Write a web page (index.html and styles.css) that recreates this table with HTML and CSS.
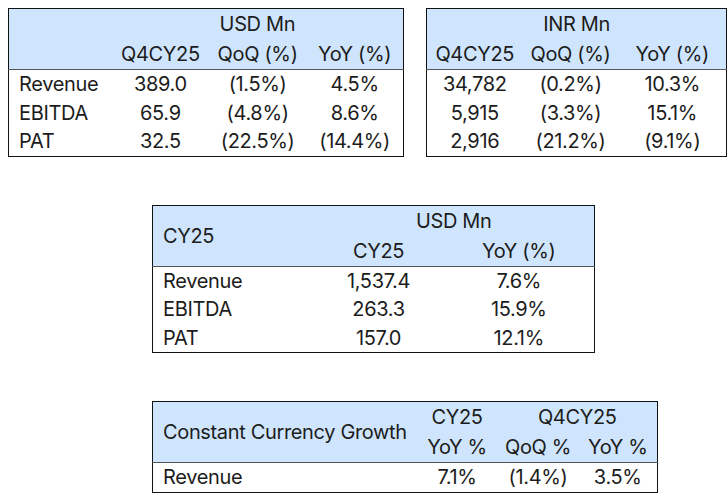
FILE: index.html
```html
<!DOCTYPE html>
<html>
<head>
<meta charset="utf-8">
<link rel="stylesheet" href="styles.css">
</head>
<body>
<div class="page">
  <div class="top-row">
    <table class="fin t1">
      <colgroup><col class="c-label1"><col class="c-n"><col class="c-n"><col class="c-n"></colgroup>
      <thead>
        <tr><th></th><th colspan="3">USD Mn</th></tr>
        <tr class="last-head"><th></th><th>Q4CY25</th><th>QoQ (%)</th><th>YoY (%)</th></tr>
      </thead>
      <tbody>
        <tr><td class="lbl">Revenue</td><td>389.0</td><td>(1.5%)</td><td>4.5%</td></tr>
        <tr><td class="lbl">EBITDA</td><td>65.9</td><td>(4.8%)</td><td>8.6%</td></tr>
        <tr><td class="lbl">PAT</td><td>32.5</td><td>(22.5%)</td><td>(14.4%)</td></tr>
      </tbody>
    </table>
    <table class="fin t2">
      <colgroup><col class="c2a"><col class="c2b"><col class="c2c"></colgroup>
      <thead>
        <tr><th colspan="3">INR Mn</th></tr>
        <tr class="last-head"><th>Q4CY25</th><th>QoQ (%)</th><th>YoY (%)</th></tr>
      </thead>
      <tbody>
        <tr><td>34,782</td><td>(0.2%)</td><td>10.3%</td></tr>
        <tr><td>5,915</td><td>(3.3%)</td><td>15.1%</td></tr>
        <tr><td>2,916</td><td>(21.2%)</td><td>(9.1%)</td></tr>
      </tbody>
    </table>
  </div>

  <table class="fin t3">
    <colgroup><col class="c3a"><col class="c3b"><col class="c3c"></colgroup>
    <thead>
      <tr><th rowspan="2" class="lbl hdr-end">CY25</th><th colspan="2">USD Mn</th></tr>
      <tr class="last-head"><th>CY25</th><th>YoY (%)</th></tr>
    </thead>
    <tbody>
      <tr><td class="lbl">Revenue</td><td>1,537.4</td><td>7.6%</td></tr>
      <tr><td class="lbl">EBITDA</td><td>263.3</td><td>15.9%</td></tr>
      <tr><td class="lbl">PAT</td><td>157.0</td><td>12.1%</td></tr>
    </tbody>
  </table>

  <table class="fin t4">
    <colgroup><col class="c4a"><col class="c4b"><col class="c4c"><col class="c4d"></colgroup>
    <thead>
      <tr><th rowspan="2" class="lbl hdr-end">Constant Currency Growth</th><th>CY25</th><th colspan="2">Q4CY25</th></tr>
      <tr class="last-head"><th>YoY %</th><th>QoQ %</th><th>YoY %</th></tr>
    </thead>
    <tbody>
      <tr><td class="lbl">Revenue</td><td>7.1%</td><td>(1.4%)</td><td>3.5%</td></tr>
    </tbody>
  </table>
</div>
</body>
</html>
```
FILE: styles.css
```css
html, body {
  margin: 0;
  padding: 0;
  background: #ffffff;
}

body {
  font-family: Inter, "Noto Sans", "Liberation Sans", sans-serif;
  font-size: 20px;
  color: #1c1c1c;
  letter-spacing: -0.35px;
}

.page {
  display: flex;
  flex-direction: column;
  align-items: flex-start;
  padding: 8px 0 0 8px;
}

.top-row {
  display: flex;
  gap: 22px;
}

.fin {
  border-collapse: collapse;
  table-layout: fixed;
  border: 1.5px solid #111;
}

.fin th,
.fin td {
  padding: 0;
  text-align: center;
  font-weight: 400;
  white-space: nowrap;
}

.fin thead th {
  background: #cfe5fd;
  height: 30px;
  line-height: 30px;
}

.fin thead tr.last-head th,
.fin thead th.hdr-end {
  border-bottom: 1px solid #555;
}

.fin tbody td {
  height: 28.5px;
  line-height: 28.5px;
}

.fin .lbl {
  text-align: left;
  padding-left: 10px;
}

.t1 { width: 396px; }
.c-label1 { width: 103px; }
.c-n { width: 97px; }

.t2 { width: 300px; }
.c2a { width: 96px; }
.c2b { width: 96px; }
.c2c { width: 108px; }

.t3 {
  width: 442px;
  margin: 48px 0 0 144px;
}
.c3a { width: 161px; }
.c3b { width: 130px; }
.c3c { width: 151px; }

.t4 {
  width: 505px;
  margin: 48px 0 0 144px;
}
.c4a { width: 264px; }
.c4b { width: 81px; }
.c4c { width: 81px; }
.c4d { width: 79px; }
```
